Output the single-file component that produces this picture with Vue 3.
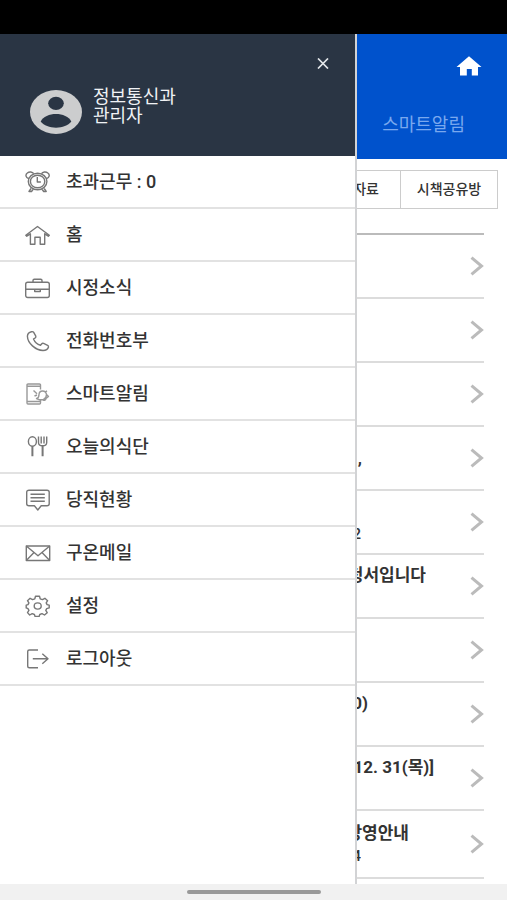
<script setup>
const menu = [
  { icon: 'alarm', label: '초과근무 : 0' },
  { icon: 'home', label: '홈' },
  { icon: 'case', label: '시정소식' },
  { icon: 'phone', label: '전화번호부' },
  { icon: 'smart', label: '스마트알림' },
  { icon: 'meal', label: '오늘의식단' },
  { icon: 'chat', label: '당직현황' },
  { icon: 'mail', label: '구온메일' },
  { icon: 'gear', label: '설정' },
  { icon: 'logout', label: '로그아웃' }
]

// extent: width in px of the part of each post that stays clear of the drawer
const posts = [
  { title: '', sub: '', extent: 0 },
  { title: '', sub: '', extent: 0 },
  { title: '', sub: '', extent: 0 },
  { title: ',', sub: null, extent: 5 },
  { title: '', sub: '2', extent: 4 },
  { title: '청서입니다', sub: '', extent: 69 },
  { title: '', sub: '', extent: 0 },
  { title: '0)', sub: '', extent: 11 },
  { title: '12. 31(목)]', sub: '', extent: 77 },
  { title: '방영안내', sub: '4', extent: 52, subExtent: 4 }
]
</script>

<template>
  <div class="screen">
    <div class="status"></div>
    <div class="body">
      <aside class="drawer">
        <header class="drawer-head">
          <button class="close" type="button" aria-label="닫기">
            <svg width="12" height="11" viewBox="0 0 12 11"><path d="M1 .5 11 10.500M11 .5 1 10.500" /></svg>
          </button>
          <div class="profile">
            <svg class="avatar" width="52" height="44" viewBox="0 0 52 44">
              <ellipse cx="26" cy="22" rx="26" ry="22" fill="#cccdce" />
              <ellipse cx="26" cy="13.300" rx="7.800" ry="6.600" fill="#2a3544" />
              <path d="M10.700 31.500C13 26.500 19.500 24 26 24s13 2.500 15.300 7.500C38 35.500 32.500 37.700 26 37.700s-12-2.200-15.300-6.200Z" fill="#2a3544" />
            </svg>
            <p class="who">정보통신과<br />관리자</p>
          </div>
        </header>
        <nav>
          <a v-for="item in menu" :key="item.icon" class="item" href="#">
            <svg class="icon" width="26" height="22" viewBox="0 0 26 22">
              <g v-if="item.icon === 'alarm'">
                <ellipse cx="12.600" cy="10.500" rx="9.300" ry="8.300" />
                <ellipse cx="12.600" cy="10.500" rx="7.200" ry="6.300" />
                <path d="M12.300 6v5h3.600M4 7.800C.5 7 .2 3.600 2.300 2 4.300.4 7.500.7 8.700 2.700M21.200 7.800c3.500-.8 3.800-4.200 1.700-5.800-2-1.600-5.200-1.300-6.400.7M6 17.500l-2 3h2.500l1.500-2M19.200 17.500l2 3h-2.500l-1.500-2" />
              </g>
              <path v-else-if="item.icon === 'home'" d="M12.500 2.500.8 11.200l1 1 3.600-2.400v10.400h4.500v-7h5.300v7h4.500V9.800l3.600 2.400 1-1Z" />
              <g v-else-if="item.icon === 'case'">
                <rect x=".7" y="5.200" width="23.600" height="15.300" rx="2" />
                <path d="M8 5V3.500Q8 2.300 9.300 2.300h6.400Q17 2.300 17 3.500V5M.7 12.300h23.600M9.700 12.500v2h5.600v-2" />
              </g>
              <path v-else-if="item.icon === 'phone'" d="M6.500 1.700C4 2.200 2.500 4 2.400 6.200c.3 7 8 14 15.600 14.300 2.600 0 4.900-1.400 5.500-3.500.2-.8-.2-1.200-.9-1.600l-4-2c-.7-.3-1.400-.2-1.800.4l-1.300 1.500c-3.300-.9-5.800-3.300-7-6.200l1.900-1.400c.5-.4.6-1 .4-1.600L8.700 2.400C8.300 1.700 7.600 1.500 6.500 1.700Z" />
              <g v-else-if="item.icon === 'smart'" class="pale">
                <path d="M15.500 6.500V2q0-1-1-1H3Q2 1 2 2v18q0 1 1 1h11.500q1 0 1-1v-3M2 3.300h13.500M2 18.500h13.500" />
                <path d="m8.500 7.500 3.500 3.300M9.500 13l2.500-1M11.500 15.500q2.500-.5 2.500-4 .3-3.500 3.500-3.500 3.500 0 4 3.500 0 3.500-3 5l-4 .3ZM20.500 8.800l1.500-1M18 17q2.500 1 3-1.500l2.500-2-2-2" />
              </g>
              <g v-else-if="item.icon === 'meal'">
                <ellipse cx="7.400" cy="5.500" rx="4" ry="4.700" />
                <path class="bold" d="M7.400 10.200v10M17.600 10v10.200" />
                <path d="M13.500.5v6q0 3.300 4.100 3.300t4.100-3.300v-6M16.200.5v7M19 .5v7" />
              </g>
              <g v-else-if="item.icon === 'chat'">
                <path d="M4 1.300h18q2.200 0 2.200 2v11.500q0 2-2.200 2h-5.800l-3.400 4.200-3.400-4.200H4q-2.300 0-2.300-2V3.300q0-2 2.300-2Z" />
                <path d="M5.500 5.300h14.300M5.500 8.800h14.300M5.500 12.300h14.300" />
              </g>
              <g v-else-if="item.icon === 'mail'">
                <rect x="1.300" y="4" width="23.400" height="14.500" />
                <path d="m1.300 4 11.700 9.800L24.700 4M1.300 18.500 9 10.600M24.700 18.500 17 10.600" />
              </g>
              <g v-else-if="item.icon === 'gear'">
                <path d="M10.500 1.300h4l.7 2.500 2.200.8 2.500-1.300 2.700 2.400-1.400 2.200.9 1.700 2.100.5v2.800l-2.500.8-.9 1.700 1.400 2.300-2.700 2.300-2.500-1.300-2.200.8-.7 2h-4l-.7-2-2.200-.8-2.500 1.300L2.500 17.600l1.400-2.200-.9-1.700-1.800-.8v-2.800L3 9.600l.9-1.700-1.400-2.200 2.600-2.400 2.500 1.300 2.200-.8Z" />
                <ellipse cx="12.700" cy="11" rx="3.500" ry="3.100" />
              </g>
              <path v-else d="M13 2H4.300Q2.700 2 2.700 3.500v14.700q0 1.500 1.600 1.500H13M7.800 10.800h15M17.300 5.800l5.700 5-5.700 5" />
            </svg>
            <span>{{ item.label }}</span>
          </a>
        </nav>
      </aside>

      <main class="page">
        <header class="page-head">
          <a class="home" href="#" aria-label="홈">
            <svg width="26" height="20" viewBox="0 0 26 20"><path d="M13 .3 25.500 11H22v8.500h-6.200v-6.500h-5v6.500H4V11H.5Z" fill="#fff" /></svg>
          </a>
          <a class="head-tab" href="#">스마트알림</a>
        </header>
        <div class="tabs">
          <button type="button" class="tab first">자료</button>
          <button type="button" class="tab">시책공유방</button>
        </div>
        <div class="list">
          <a v-for="(post, i) in posts" :key="i" class="post" href="#">
            <span class="text">
              <strong class="clip title" :style="{ width: post.extent + 'px' }">{{ post.title }}</strong>
              <span v-if="post.sub !== null" class="clip sub" :style="{ width: (post.subExtent || post.extent) + 'px' }">{{ post.sub }}</span>
            </span>
            <svg class="chevron" width="14" height="20" viewBox="0 0 14 20"><path d="M1.500 1.700 11.500 10 1.500 18.300" /></svg>
          </a>
        </div>
      </main>
    </div>
    <div class="gesture"><div class="pill"></div></div>
  </div>
</template>

<style>
body {
  background: #fff;
}
</style>

<style scoped>
.screen {
  display: grid;
  grid-template-rows: 34px 1fr 16px;
  min-height: 100vh;
  font-family: Roboto, "Noto Sans CJK KR", sans-serif;
  color: #333;
}
.screen * {
  box-sizing: border-box;
}
a {
  color: inherit;
  text-decoration: none;
}
button {
  font: inherit;
  color: inherit;
  background: none;
  border: 0;
  padding: 0;
}
.status {
  background: #000;
}
.body {
  display: grid;
  grid-template-columns: minmax(0, 1fr) 150px;
}
.drawer {
  border-right: 2px solid #d2d3d5;
}
.drawer-head {
  display: flex;
  flex-direction: column;
  gap: 12px;
  height: 122px;
  padding: 17px 20px 0 30px;
  background: #2a3544;
  color: #f0f2f5;
}
.close {
  display: flex;
  align-items: center;
  justify-content: center;
  align-self: flex-end;
  width: 24px;
  height: 24px;
}
.close path {
  stroke: #e4e7ea;
  stroke-width: 1.7;
}
.profile {
  display: flex;
  align-items: flex-start;
  gap: 11px;
}
.avatar {
  margin-top: 3px;
}
.who {
  margin: 0;
  font-size: 18px;
  line-height: 19px;
}
.item {
  display: flex;
  align-items: center;
  gap: 15px;
  height: 53px;
  padding-left: 25px;
  border-bottom: 2px solid #e2e2e2;
  font-size: 18px;
  font-weight: 500;
  line-height: 24px;
}
.icon {
  fill: none;
  stroke: #777;
  stroke-width: 1.4;
  stroke-linejoin: round;
}
.icon .pale {
  stroke: #999;
}
.icon .bold {
  stroke-width: 2;
}
.page {
  min-width: 0;
  overflow: hidden;
}
.page-head {
  display: flex;
  flex-direction: column;
  align-items: flex-end;
  gap: 37px;
  height: 125px;
  padding: 22px 25px 0 0;
  background: #0052cc;
}
.home {
  display: flex;
}
.head-tab {
  padding-right: 17px;
  font-size: 18px;
  line-height: 24px;
  color: #79a8ee;
}
.tabs {
  display: flex;
  justify-content: flex-end;
  height: 39px;
  margin: 11px 9px 24px 0;
  border: 1px solid #ccc;
  border-left: 0;
}
.tab {
  flex: none;
  width: 96px;
  padding-bottom: 3px;
  font-size: 14px;
  font-weight: 500;
  white-space: nowrap;
}
.tab.first {
  flex: 1;
  display: flex;
  align-items: center;
  justify-content: flex-end;
  width: auto;
  min-width: 0;
  padding-right: 21px;
  overflow: hidden;
  border-right: 1px solid #ccc;
}
.list {
  margin-right: 23px;
  border-top: 2px solid #bbb;
}
.post {
  display: flex;
  align-items: center;
  justify-content: space-between;
  height: 64px;
  border-bottom: 2px solid #dcdcdc;
}
.post:last-child {
  height: 68px;
}
.text {
  display: flex;
  flex-direction: column;
}
.clip {
  display: flex;
  justify-content: flex-end;
  overflow: hidden;
  white-space: pre;
}
.title {
  height: 24px;
  font-size: 17px;
  line-height: 24px;
}
.sub {
  height: 22px;
  font-size: 15px;
  font-weight: 500;
  line-height: 22px;
}
.chevron {
  fill: none;
  stroke: #bbb;
  stroke-width: 3;
}
.gesture {
  display: flex;
  align-items: center;
  justify-content: center;
  background: #f1f1f1;
}
.pill {
  width: 134px;
  height: 4px;
  border-radius: 2px;
  background: #999;
}
</style>
